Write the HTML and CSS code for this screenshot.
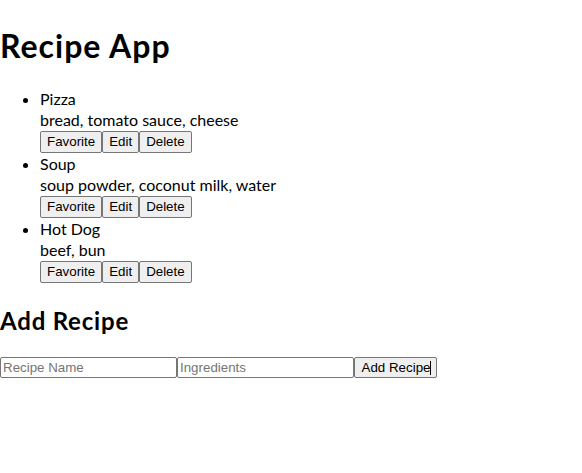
FILE: index.html
```html
<!DOCTYPE html>
<html lang="en">
<head>
  <meta charset="UTF-8">
  <title>Recipe App</title>
  <link rel="stylesheet" href="styles.css">
</head>
<body>
  <h1>Recipe App</h1>
  <ul class="recipes">
    <li>
      <div class="name">Pizza</div>
      <div class="ingredients">bread, tomato sauce, cheese</div>
      <div class="actions"><button>Favorite</button><button>Edit</button><button>Delete</button></div>
    </li>
    <li>
      <div class="name">Soup</div>
      <div class="ingredients">soup powder, coconut milk, water</div>
      <div class="actions"><button>Favorite</button><button>Edit</button><button>Delete</button></div>
    </li>
    <li>
      <div class="name">Hot Dog</div>
      <div class="ingredients">beef, bun</div>
      <div class="actions"><button>Favorite</button><button>Edit</button><button>Delete</button></div>
    </li>
  </ul>
  <h2>Add Recipe</h2>
  <div class="add-form"><input type="text" placeholder="Recipe Name"><input type="text" placeholder="Ingredients"><button class="add">Add Recipe<span class="caret"></span></button></div>
</body>
</html>
```
FILE: styles.css
```css
body {
  margin: 0;
  font-family: Lato, "Liberation Sans", sans-serif;
  font-size: 16px;
  line-height: 1.33;
  color: #000;
}
h1 {
  font-size: 32px;
  letter-spacing: 1px;
  margin: 25px 0 20px;
}
h2 {
  font-size: 24px;
  letter-spacing: 0.8px;
  margin: 22px 0 20px;
}
.recipes {
  margin: 16px 0;
  padding-left: 40px;
  line-height: 21.5px;
}
.actions {
  display: flex;
}
button,
input {
  font-family: "Liberation Sans", Arial, sans-serif;
  font-size: 13.33px;
  line-height: normal;
  color: #000;
}
button {
  height: 22px;
  padding: 1px 6px;
  background-color: #efefef;
  border: 1px solid #767676;
  border-radius: 2px;
  white-space: nowrap;
}
.add-form {
  display: flex;
  padding-top: 1px;
}
.add-form input {
  width: 177px;
  height: 21px;
  box-sizing: border-box;
  padding: 1px 2px;
  border: 1px solid #767676;
  border-radius: 2px;
}
.add-form input::placeholder {
  color: #757575;
}
.add-form .add {
  height: 21px;
  width: 83px;
  padding: 1px 4px 1px 6px;
}
.caret {
  display: inline-block;
  width: 1px;
  height: 14px;
  background-color: #000;
  vertical-align: -3px;
}
```
